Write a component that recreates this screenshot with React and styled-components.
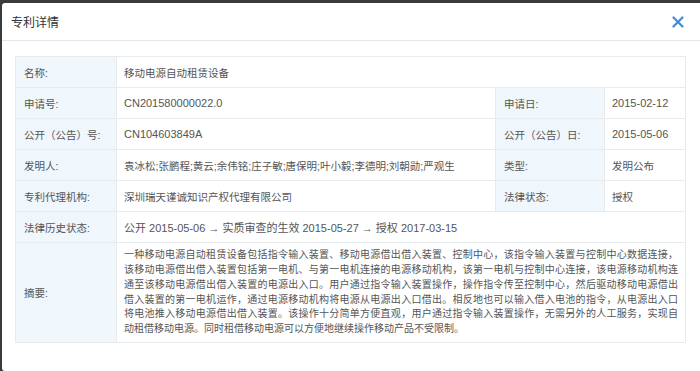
import React from "react";
import styled, { createGlobalStyle } from "styled-components";

const Global = createGlobalStyle`
  html, body { margin: 0; padding: 0; }
  body {
    background: #3b3b3b;
    font-family: "Liberation Sans", "Noto Sans CJK SC", sans-serif;
    overflow: hidden;
  }
`;

const Modal = styled.div`
  margin: 3px 0 0 2px;
  height: 368px;
  background: #fff;
  border-radius: 3px 0 0 3px;
  display: flex;
  flex-direction: column;
  overflow: hidden;
`;

const Header = styled.div`
  flex-shrink: 0;
  height: 38px;
  display: flex;
  align-items: center;
  justify-content: space-between;
  padding: 0 16px 0 9px;
  border-bottom: 1px solid #e5e5e5;
  box-sizing: border-box;
`;

const Title = styled.div`
  font-size: 12px;
  color: #333;
`;

const Close = styled.div`
  width: 12px;
  height: 12px;
  cursor: pointer;
  display: flex;
`;

const Body = styled.div`
  flex-shrink: 0;
  padding: 15px 13px 0 13px;
`;

const Table = styled.table`
  width: 670px;
  border-collapse: collapse;
  table-layout: fixed;
  font-size: 11px;
  color: #555;
`;

const Col = styled.col`
  width: ${(p) => p.w}px;
`;

const Row = styled.tr`
  height: ${(p) => p.h || 31}px;
`;

const Label = styled.td`
  background: #eff6fc;
  border: 1px solid #e8ebee;
  padding: 0 8px;
  font-size: 10.5px;
  vertical-align: middle;
  white-space: nowrap;
`;

const Value = styled.td`
  border: 1px solid #e8ebee;
  padding: 0 7px;
  font-size: ${(p) => (p.cjk ? "10.5px" : "11px")};
  vertical-align: middle;
  white-space: nowrap;
`;

const Abstract = styled.div`
  padding: 5px 0;
  font-size: 10px;
  line-height: 14.7px;
`;

const Line = styled.div`
  white-space: pre;
  text-align: ${(p) => (p.last ? "left" : "justify")};
  text-align-last: ${(p) => (p.last ? "left" : "justify")};
`;

const abstractLines = [
  "一种移动电源自动租赁设备包括指令输入装置、移动电源借出借入装置、控制中心，该指令输入装置与控制中心数据连接，",
  "该移动电源借出借入装置包括第一电机、与第一电机连接的电源移动机构，该第一电机与控制中心连接，该电源移动机构连",
  "通至该移动电源借出借入装置的电源出入口。用户通过指令输入装置操作，操作指令传至控制中心，然后驱动移动电源借出",
  "借入装置的第一电机运作，通过电源移动机构将电源从电源出入口借出。相反地也可以输入借入电池的指令，从电源出入口",
  "将电池推入移动电源借出借入装置。该操作十分简单方便直观，用户通过指令输入装置操作，无需另外的人工服务，实现自",
  "动租借移动电源。同时租借移动电源可以方便地继续操作移动产品不受限制。",
];

export default function App() {
  return (
    <>
      <Global />
      <Modal>
        <Header>
          <Title>专利详情</Title>
          <Close>
            <svg width="12" height="12" viewBox="0 0 12 12">
              <path d="M1.5 1.5 L10.5 10.5 M10.5 1.5 L1.5 10.5" stroke="#3d8ed0" strokeWidth="2.2" strokeLinecap="round" />
            </svg>
          </Close>
        </Header>
        <Body>
          <Table>
            <colgroup>
              <Col w={101} />
              <Col w={379} />
              <Col w={109} />
              <Col w={81} />
            </colgroup>
            <tbody>
              <Row>
                <Label>名称:</Label>
                <Value cjk colSpan={3}>移动电源自动租赁设备</Value>
              </Row>
              <Row>
                <Label>申请号:</Label>
                <Value>CN201580000022.0</Value>
                <Label>申请日:</Label>
                <Value>2015-02-12</Value>
              </Row>
              <Row>
                <Label>公开（公告）号:</Label>
                <Value>CN104603849A</Value>
                <Label>公开（公告）日:</Label>
                <Value>2015-05-06</Value>
              </Row>
              <Row>
                <Label>发明人:</Label>
                <Value cjk>袁冰松;张鹏程;黄云;余伟铭;庄子敏;唐保明;叶小毅;李德明;刘朝勋;严观生</Value>
                <Label>类型:</Label>
                <Value cjk>发明公布</Value>
              </Row>
              <Row>
                <Label>专利代理机构:</Label>
                <Value cjk>深圳瑞天谨诚知识产权代理有限公司</Value>
                <Label>法律状态:</Label>
                <Value cjk>授权</Value>
              </Row>
              <Row>
                <Label>法律历史状态:</Label>
                <Value colSpan={3}>公开 2015-05-06 → 实质审查的生效 2015-05-27 → 授权 2017-03-15</Value>
              </Row>
              <Row h={100}>
                <Label>摘要:</Label>
                <Value colSpan={3}>
                  <Abstract>
                    {abstractLines.map((l, i) => (
                      <Line key={i} last={i === abstractLines.length - 1}>{l}</Line>
                    ))}
                  </Abstract>
                </Value>
              </Row>
            </tbody>
          </Table>
        </Body>
      </Modal>
    </>
  );
}
